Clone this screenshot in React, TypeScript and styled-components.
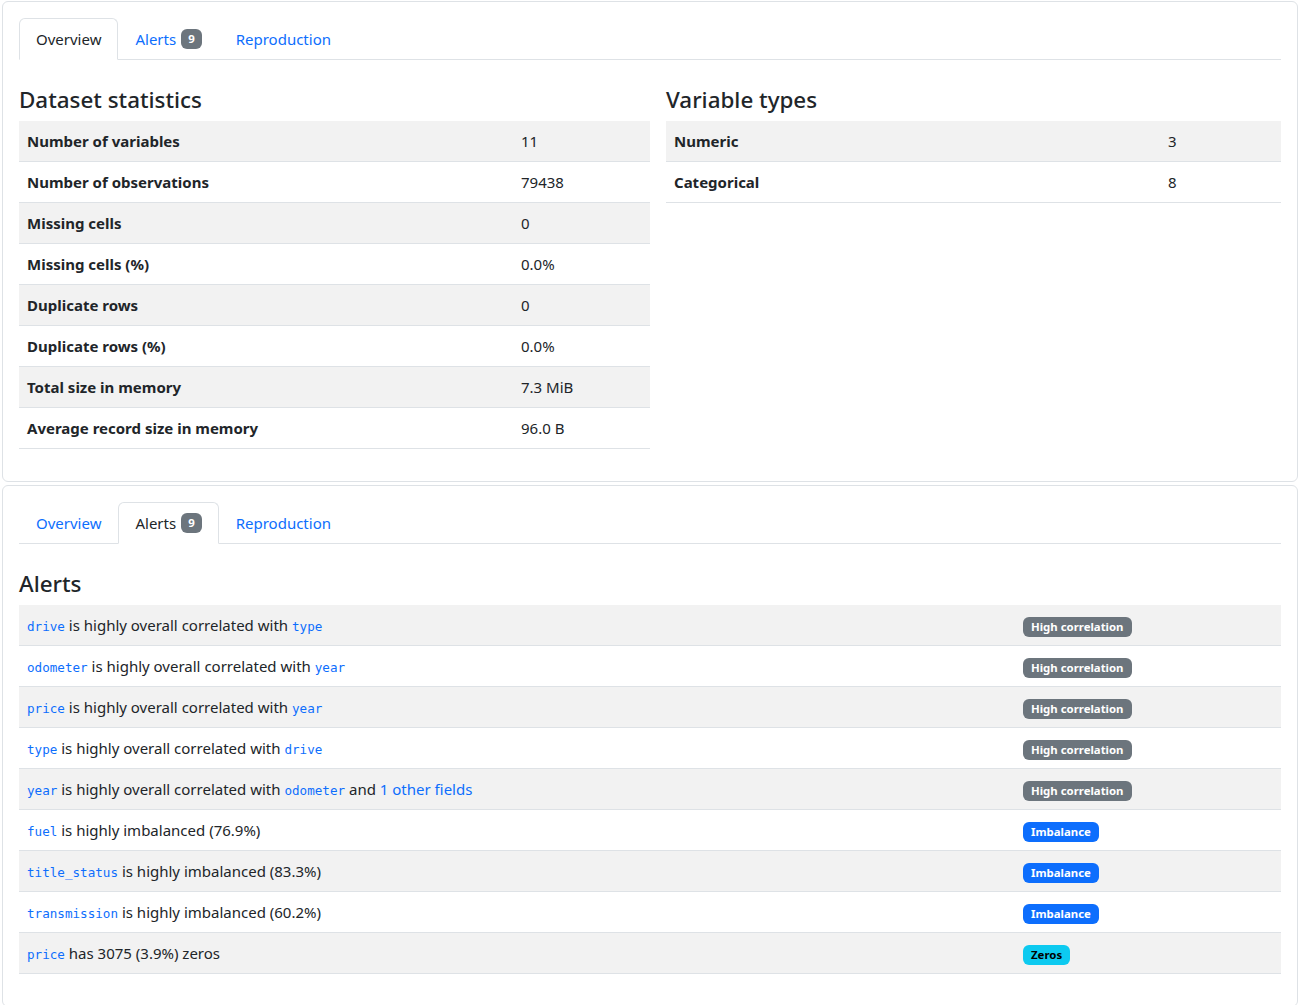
import React from 'react';
import styled, { createGlobalStyle } from 'styled-components';

const GlobalStyle = createGlobalStyle`
  html, body {
    margin: 0;
    padding: 0;
    background: #fff;
  }
  body {
    font-family: 'Noto Sans', 'Open Sans', sans-serif;
    font-size: 15px;
    line-height: 24px;
    color: #212529;
  }
  * {
    box-sizing: border-box;
  }
`;

const Page = styled.div`
  padding: 1px 0 0 2px;
  display: flex;
  flex-direction: column;
  gap: 3px;
`;

const Card = styled.section`
  border: 1px solid #dee2e6;
  border-radius: 6px;
  padding: 16px 16px 0;
`;

const Tabs = styled.ul`
  display: flex;
  list-style: none;
  margin: 0;
  padding: 0;
  border-bottom: 1px solid #dee2e6;
`;

const Tab = styled.li<{ active?: boolean }>`
  margin-bottom: -1px;
  padding: 8px 16px;
  border: 1px solid ${p => (p.active ? '#dee2e6' : 'transparent')};
  border-bottom-color: ${p => (p.active ? '#fff' : 'transparent')};
  border-radius: 6px 6px 0 0;
  background: ${p => (p.active ? '#fff' : 'transparent')};
  color: ${p => (p.active ? '#212529' : '#0d6efd')};
  display: flex;
  align-items: center;
  gap: 4px;
  cursor: pointer;
`;

const Badge = styled.span<{ tone: 'secondary' | 'primary' | 'info' }>`
  display: inline-block;
  padding: 3px 8px;
  font-size: 11.4px;
  font-weight: 700;
  line-height: 14px;
  border-radius: 6px;
  white-space: nowrap;
  background: ${p => (p.tone === 'secondary' ? '#6c757d' : p.tone === 'primary' ? '#0d6efd' : '#0dcaf0')};
  color: ${p => (p.tone === 'info' ? '#000' : '#fff')};
`;

const CountBadge = styled(Badge)`
  padding: 3px 7px;
  margin-left: 1px;
`;

const Heading = styled.h4`
  margin: 26px 0 6px;
  font-size: 22.4px;
  font-weight: 500;
  line-height: 28.8px;
`;

const Columns = styled.div`
  display: grid;
  grid-template-columns: 631px 1fr;
  gap: 16px;
`;

const Table = styled.table`
  width: 100%;
  border-collapse: collapse;
  margin-bottom: 32px;
`;

const Row = styled.tr`
  border-bottom: 1px solid #dee2e6;
  &:nth-child(odd) {
    background: #f2f2f2;
  }
`;

const Label = styled.th<{ w: number }>`
  width: ${p => p.w}px;
  padding: 8px;
  text-align: left;
  font-weight: 700;
`;

const Cell = styled.td<{ w?: number }>`
  padding: 8px;
  ${p => (p.w ? `width: ${p.w}px;` : '')}
`;

const Link = styled.a`
  color: #0d6efd;
  text-decoration: none;
`;

const Code = styled.code`
  font-family: 'DejaVu Sans Mono', 'Liberation Mono', monospace;
  font-size: 12.6px;
  line-height: 1;
  color: #0d6efd;
`;

const stats: [string, string][] = [
  ['Number of variables', '11'],
  ['Number of observations', '79438'],
  ['Missing cells', '0'],
  ['Missing cells (%)', '0.0%'],
  ['Duplicate rows', '0'],
  ['Duplicate rows (%)', '0.0%'],
  ['Total size in memory', '7.3 MiB'],
  ['Average record size in memory', '96.0 B'],
];

const types: [string, string][] = [
  ['Numeric', '3'],
  ['Categorical', '8'],
];

type Alert = { body: React.ReactNode; badge: string; tone: 'secondary' | 'primary' | 'info' };

const v = (name: string) => (
  <Link href="#">
    <Code>{name}</Code>
  </Link>
);

const alerts: Alert[] = [
  { body: <>{v('drive')} is highly overall correlated with {v('type')}</>, badge: 'High correlation', tone: 'secondary' },
  { body: <>{v('odometer')} is highly overall correlated with {v('year')}</>, badge: 'High correlation', tone: 'secondary' },
  { body: <>{v('price')} is highly overall correlated with {v('year')}</>, badge: 'High correlation', tone: 'secondary' },
  { body: <>{v('type')} is highly overall correlated with {v('drive')}</>, badge: 'High correlation', tone: 'secondary' },
  {
    body: (
      <>
        {v('year')} is highly overall correlated with {v('odometer')} and <Link href="#">1 other fields</Link>
      </>
    ),
    badge: 'High correlation',
    tone: 'secondary',
  },
  { body: <>{v('fuel')} is highly imbalanced (76.9%)</>, badge: 'Imbalance', tone: 'primary' },
  { body: <>{v('title_status')} is highly imbalanced (83.3%)</>, badge: 'Imbalance', tone: 'primary' },
  { body: <>{v('transmission')} is highly imbalanced (60.2%)</>, badge: 'Imbalance', tone: 'primary' },
  { body: <>{v('price')} has 3075 (3.9%) zeros</>, badge: 'Zeros', tone: 'info' },
];

function NavTabs({ active }: { active: 'overview' | 'alerts' }) {
  return (
    <Tabs>
      <Tab active={active === 'overview'}>Overview</Tab>
      <Tab active={active === 'alerts'}>
        Alerts <CountBadge tone="secondary">9</CountBadge>
      </Tab>
      <Tab>Reproduction</Tab>
    </Tabs>
  );
}

function KeyValueTable({ rows }: { rows: [string, string][] }) {
  return (
    <Table>
      <tbody>
        {rows.map(([k, val]) => (
          <Row key={k}>
            <Label w={494}>{k}</Label>
            <Cell>{val}</Cell>
          </Row>
        ))}
      </tbody>
    </Table>
  );
}

export default function App() {
  return (
    <>
      <GlobalStyle />
      <Page>
        <Card>
          <NavTabs active="overview" />
          <Columns>
            <div>
              <Heading>Dataset statistics</Heading>
              <KeyValueTable rows={stats} />
            </div>
            <div>
              <Heading>Variable types</Heading>
              <KeyValueTable rows={types} />
            </div>
          </Columns>
        </Card>
        <Card>
          <NavTabs active="alerts" />
          <Heading>Alerts</Heading>
          <Table>
            <tbody>
              {alerts.map((a, i) => (
                <Row key={i}>
                  <Cell w={996}>{a.body}</Cell>
                  <Cell>
                    <Badge tone={a.tone}>{a.badge}</Badge>
                  </Cell>
                </Row>
              ))}
            </tbody>
          </Table>
        </Card>
      </Page>
    </>
  );
}
